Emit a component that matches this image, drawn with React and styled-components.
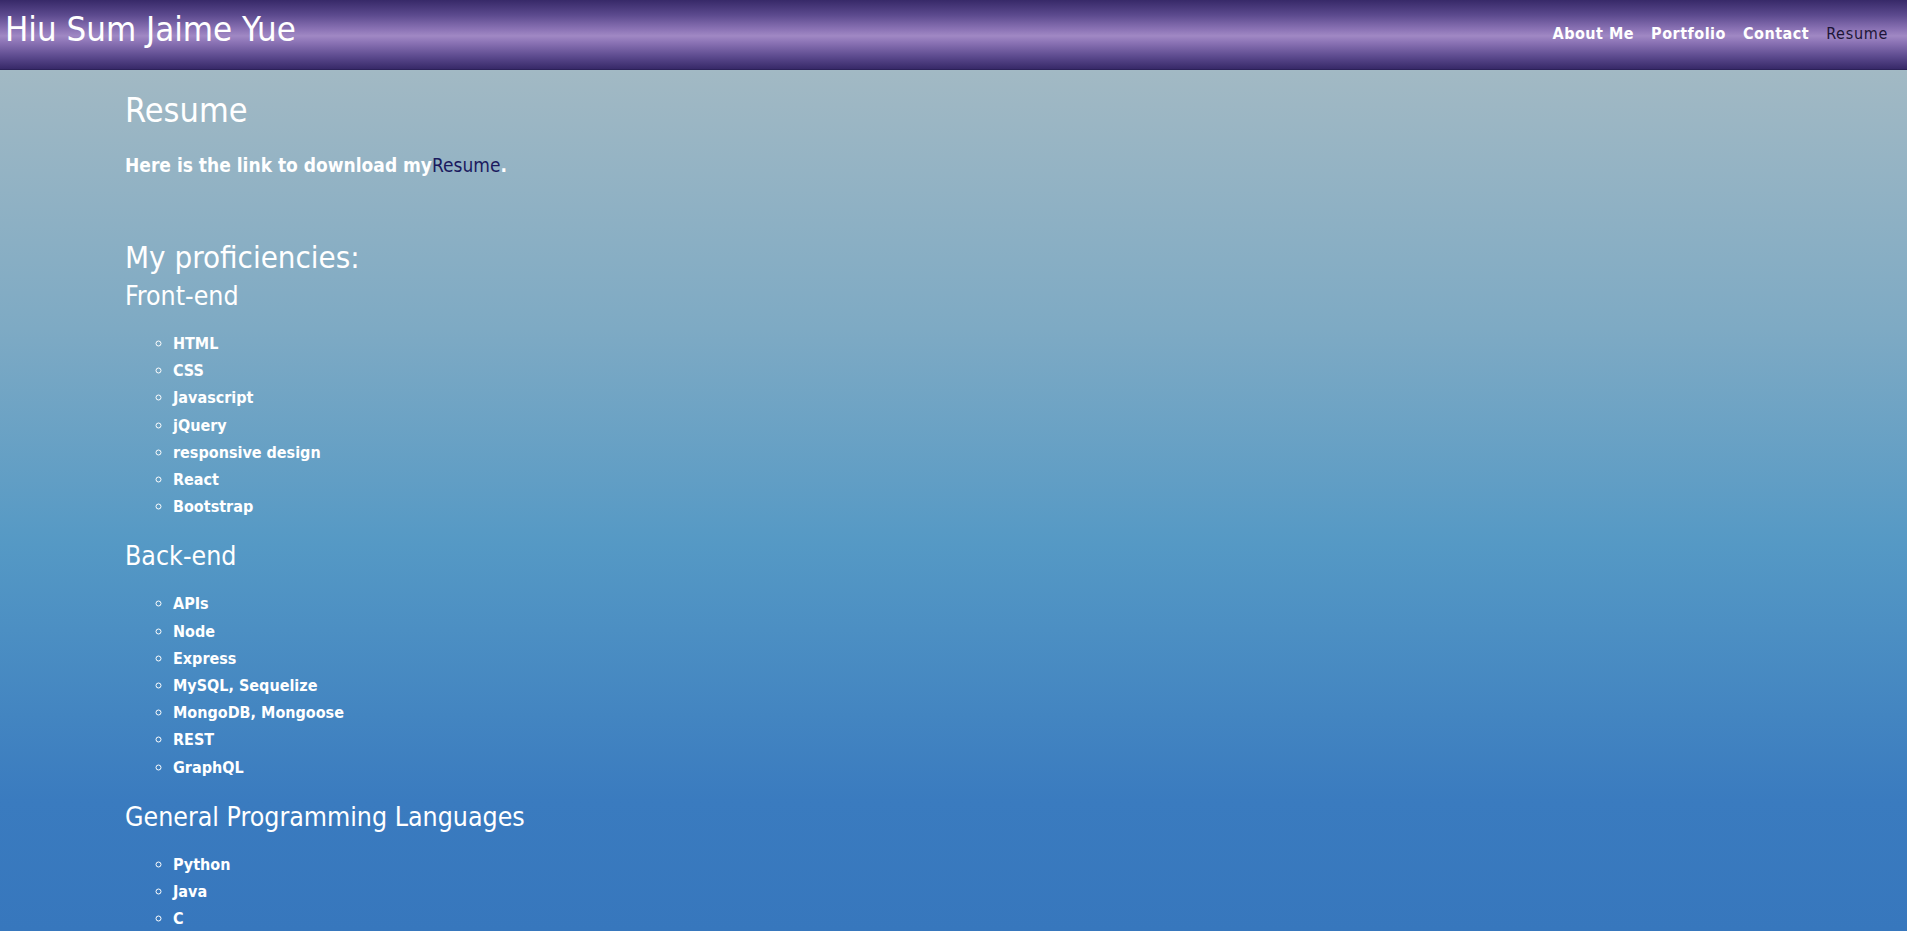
import React from "react";
import styled, { createGlobalStyle } from "styled-components";

const sections = [
  {
    title: "Front-end",
    items: ["HTML", "CSS", "Javascript", "jQuery", "responsive design", "React", "Bootstrap"],
  },
  {
    title: "Back-end",
    items: ["APIs", "Node", "Express", "MySQL, Sequelize", "MongoDB, Mongoose", "REST", "GraphQL"],
  },
  {
    title: "General Programming Languages",
    items: ["Python", "Java", "C"],
  },
];

const navLinks = ["About Me", "Portfolio", "Contact", "Resume"];

function App() {
  return (
    <>
      <GlobalStyle />
      <Page>
        <Header>
          <Brand>Hiu Sum Jaime Yue</Brand>
          <Nav>
            {navLinks.map((link) => (
              <NavLink key={link} href="#" $active={link === "Resume"}>
                {link}
              </NavLink>
            ))}
          </Nav>
        </Header>

        <Main>
          <Content>
            <Title>Resume</Title>
            <Intro>
              Here is the link to download my<DownloadLink href="#">Resume</DownloadLink>.
            </Intro>

            <SubTitle>My proficiencies:</SubTitle>
            {sections.map((section) => (
              <Section key={section.title}>
                <SectionTitle>{section.title}</SectionTitle>
                <SkillList>
                  {section.items.map((item) => (
                    <Skill key={item}>{item}</Skill>
                  ))}
                </SkillList>
              </Section>
            ))}
          </Content>
        </Main>
      </Page>
    </>
  );
}
export default App;

const GlobalStyle = createGlobalStyle`
  html, body {
    margin: 0;
    height: 100%;
    overflow: hidden;
  }
  body {
    font-family: "DejaVu Sans Condensed", "Liberation Sans Narrow", "Roboto", sans-serif;
    color: #fff;
  }
`;

const Page = styled.div`
  display: flex;
  flex-direction: column;
  height: 100vh;
`;

const Header = styled.header`
  flex: 0 0 70px;
  display: flex;
  align-items: center;
  justify-content: space-between;
  padding: 0 19px 0 5px;
  box-sizing: border-box;
  background: linear-gradient(
    #372968 0%,
    #5c4a8e 22%,
    #8a72b4 42%,
    #a088c4 52%,
    #8a72b4 62%,
    #5c4a8e 82%,
    #372968 100%
  );
  border-bottom: 1px solid #2c2158;
`;

const Brand = styled.div`
  font-size: 34.5px;
  line-height: 1;
  margin-top: -10px;
`;

const Nav = styled.nav`
  display: flex;
  gap: 17px;
  margin-top: -2px;
`;

const NavLink = styled.a`
  font-size: 16px;
  font-weight: ${(p) => (p.$active ? 400 : 700)};
  letter-spacing: ${(p) => (p.$active ? "0.7px" : "0.5px")};
  color: ${(p) => (p.$active ? "#1c1536" : "#fff")};
  text-decoration: none;
`;

const Main = styled.main`
  flex: 1;
  overflow-y: auto;
  background: linear-gradient(#a2b9c4 0%, #7eaac4 30%, #5599c5 55%, #3a7bbf 85%, #3777bd 100%);

  &::-webkit-scrollbar {
    width: 4px;
  }
  &::-webkit-scrollbar-track {
    background: #f2f2f2;
  }
  &::-webkit-scrollbar-thumb {
    background: #c2c2c2;
  }
`;

const Content = styled.div`
  padding: 20px 0 180px 125px;
`;

const Title = styled.h1`
  font-size: 34px;
  font-weight: 400;
  margin: 0 0 24px;
`;

const Intro = styled.p`
  font-size: 19px;
  font-weight: 700;
  margin: 0 0 63px;
`;

const DownloadLink = styled.a`
  color: #1b1a5e;
  font-weight: 400;
  text-decoration: none;
`;

const SubTitle = styled.h2`
  font-size: 31px;
  font-weight: 400;
  margin: 0 0 5px;
`;

const Section = styled.section`
  margin-bottom: 20px;
`;

const SectionTitle = styled.h3`
  font-size: 26.5px;
  font-weight: 400;
  margin: 0 0 19px;
`;

const SkillList = styled.ul`
  list-style: circle;
  margin: 0;
  padding-left: 48px;
`;

const Skill = styled.li`
  font-size: 16px;
  font-weight: 700;
  line-height: 27.2px;
`;
